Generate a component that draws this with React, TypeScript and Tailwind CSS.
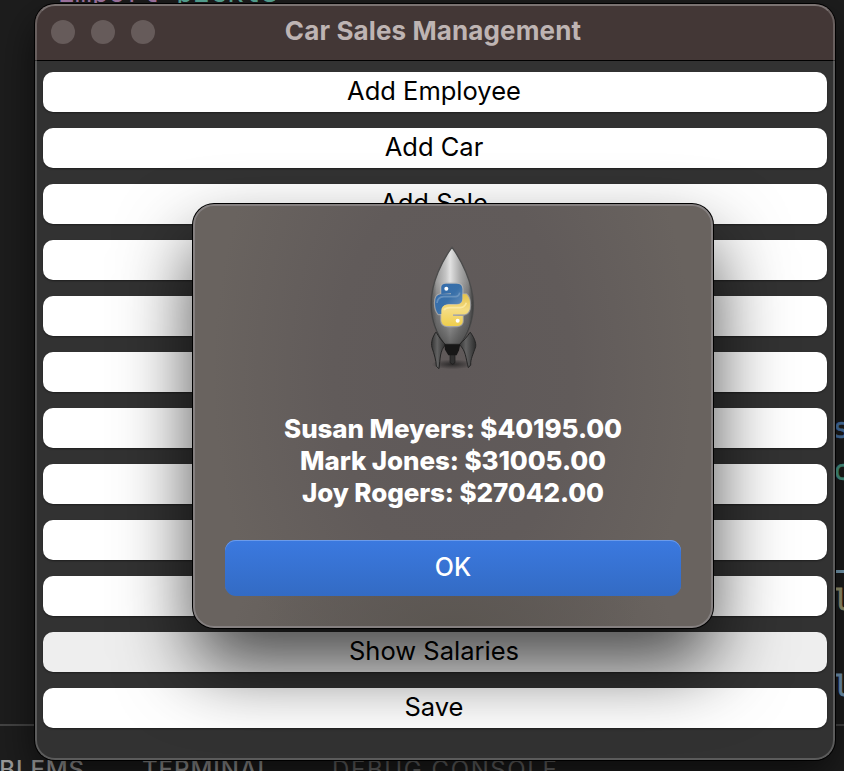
import type { ReactNode } from 'react';

const labels = ['Add Employee', 'Add Car', 'Add Sale', '', '', '', '', '', '', '', 'Show Salaries', 'Save'];

function Editor() {
  return (
    <div className="flex h-full flex-col bg-[#1d1d1d] font-['DejaVu_Sans_Mono',monospace] text-[28px] leading-[32px]">
      <div className="flex h-[724px] shrink-0 justify-between">
        <pre className="-mt-[23px] pl-[58px] font-['DejaVu_Sans_Mono',monospace] text-[#a87baa]">
          import <span className="text-[#5aac9b]">pickle</span>
        </pre>
        <div className="flex w-[11px] flex-col pt-[413px] font-medium">
          <span className="h-[42px] text-[#4e7cb0] [-webkit-text-stroke:0.5px]">s</span>
          <span className="h-[115px] text-[#4da08c] [-webkit-text-stroke:0.5px]">c</span>
          <i className="h-[3px] w-[11px] shrink-0 bg-[#7da5bd]" />
          <span className="mt-[12px] h-[86px] text-[#a09f78] [-webkit-text-stroke:0.8px]">l</span>
          <span className="text-[#789fbd] [-webkit-text-stroke:0.8px]">l</span>
        </div>
      </div>
      <div className="h-[2px] shrink-0 bg-[#444444]" />
      <div className="flex gap-[57px] whitespace-nowrap pt-[31px] font-[Inter,sans-serif] text-[24px] font-medium leading-[26px] tracking-[0.9px] text-[#9a9a9a]">
        <span className="-ml-[58px] w-[143px] text-right">PROBLEMS</span>
        <span className="w-[133px]">TERMINAL</span>
        <span className="font-normal tracking-[1.6px] text-[#686868]">DEBUG CONSOLE</span>
      </div>
    </div>
  );
}

function MenuButton({ children, pressed }: { children: ReactNode; pressed: boolean }) {
  return (
    <button
      className={`flex h-10 w-full shrink-0 items-center justify-center rounded-[10px] pb-[2px] pr-[2px] text-[25.5px] leading-none text-black shadow-[0_1px_2px_rgba(0,0,0,0.4)] ${pressed ? 'bg-[#eeeeee]' : 'bg-white'}`}
    >
      {children}
    </button>
  );
}

function Rocket() {
  return (
    <svg width="90" height="145" viewBox="0 0 270 435" className="ml-1 block">
      <defs>
        <linearGradient id="hull" x1="0" x2="1">
          <stop offset="0" stopColor="#555555" />
          <stop offset=".13" stopColor="#9a9a9a" />
          <stop offset=".35" stopColor="#c5c5c5" />
          <stop offset=".45" stopColor="#e2e2e2" />
          <stop offset=".68" stopColor="#aaaaaa" />
          <stop offset=".88" stopColor="#858585" />
          <stop offset="1" stopColor="#3c3c3c" />
        </linearGradient>
        <linearGradient id="shade" x1="0" x2="0" y1="0" y2="1">
          <stop offset=".35" stopColor="#333333" stopOpacity="0" />
          <stop offset=".7" stopColor="#333333" stopOpacity=".4" />
          <stop offset="1" stopColor="#222222" stopOpacity=".65" />
        </linearGradient>
        <linearGradient id="fin" x1="0" x2="1">
          <stop offset="0" stopColor="#343434" />
          <stop offset=".4" stopColor="#626262" />
          <stop offset="1" stopColor="#2c2c2c" />
        </linearGradient>
        <linearGradient id="blue" x1="0" x2="1" y1="0" y2="1">
          <stop offset="0" stopColor="#346cad" />
          <stop offset=".5" stopColor="#3970a9" />
          <stop offset="1" stopColor="#7398c0" />
        </linearGradient>
        <linearGradient id="yellow" x1="0" x2="0" y1="0" y2="1">
          <stop offset="0" stopColor="#e5c34c" />
          <stop offset=".5" stopColor="#f4dc83" />
          <stop offset="1" stopColor="#efce4c" />
        </linearGradient>
        <radialGradient id="ground">
          <stop offset="0" stopColor="#151515" stopOpacity=".7" />
          <stop offset="1" stopColor="#151515" stopOpacity="0" />
        </radialGradient>
      </defs>
      <ellipse cx="127" cy="388" rx="63" ry="15" fill="url(#ground)" />
      <path d="M126 37C97 76 64 142 63 205C62 253 80 300 104 328H150C172 303 192 253 190 204C188 143 154 75 126 37Z" fill="url(#hull)" stroke="#4b4b4b" strokeWidth="4" />
      <path d="M126 37C97 76 64 142 63 205C62 253 80 300 104 328H150C172 303 192 253 190 204C188 143 154 75 126 37Z" fill="url(#shade)" />
      <path d="M77 292C68 306 62 322 66 338C73 358 78 375 79 394L87 401C91 370 89 347 107 329C96 319 87 307 79 292Z" fill="url(#fin)" stroke="#252525" strokeWidth="3" />
      <path d="M181 292C191 306 199 322 197 335C190 356 181 373 182 390L175 398C167 370 168 346 148 329C160 318 171 306 180 292Z" fill="url(#fin)" stroke="#252525" strokeWidth="3" />
      <path d="M120 355H135V383L128 388L120 383Z" fill="#303030" stroke="#181818" strokeWidth="2" />
      <path d="M103 328H151L147 346L140 361H115L105 344Z" fill="#171717" />
      <g stroke="#b7b7b7" strokeOpacity=".65" strokeWidth="7" strokeLinejoin="round">
        <path d="M94 177V157Q94 146 108 146H139Q157 146 157 162V191Q157 206 141 207H116Q98 208 97 224V237H85Q75 225 75 204Q75 179 92 178H123V175Z" fill="url(#blue)" />
        <path d="M158 178H169Q180 188 180 210Q180 235 164 238H129V243H158V258Q158 271 141 273H112Q94 272 94 255V226Q94 211 112 209H141Q158 207 158 192Z" fill="url(#yellow)" />
      </g>
      <path d="M94 177V157Q94 146 108 146H139Q157 146 157 162V191Q157 206 141 207H116Q98 208 97 224V237H85Q75 225 75 204Q75 179 92 178H123V175Z" fill="url(#blue)" />
      <path d="M158 178H169Q180 188 180 210Q180 235 164 238H129V243H158V258Q158 271 141 273H112Q94 272 94 255V226Q94 211 112 209H141Q158 207 158 192Z" fill="url(#yellow)" />
      <path d="M81 204Q83 186 101 185H136Q147 185 149 173" fill="none" stroke="#83a7ca" strokeWidth="5" opacity=".6" />
      <path d="M102 225Q107 218 120 218H151Q165 216 169 203" fill="none" stroke="#fff0b0" strokeWidth="5" opacity=".7" />
      <circle cx="109" cy="161" r="6" fill="#ffffff" />
      <circle cx="143" cy="257" r="6" fill="#ffffff" />
    </svg>
  );
}

export default function App() {
  return (
    <main className="relative h-[771px] w-[844px] overflow-hidden font-[Inter,sans-serif]">
      <Editor />
      <section className="absolute left-[35px] top-[4px] flex h-[756px] w-[800px] flex-col overflow-hidden rounded-[20px] bg-[#323232] shadow-[0_0_0_1px_#000,0_16px_40px_rgba(0,0,0,0.6)]">
        <header className="grid h-[57px] shrink-0 grid-cols-[130px_536px_1fr] items-center border-b border-black bg-[#433736]">
          <div className="flex gap-4 pl-4">
            <i className="size-6 rounded-full bg-[#665b5a]" />
            <i className="size-6 rounded-full bg-[#665b5a]" />
            <i className="size-6 rounded-full bg-[#665b5a]" />
          </div>
          <h1 className="pb-[2px] text-center text-[26px] font-bold leading-none tracking-[0.12px] text-[#beb4b3]">Car Sales Management</h1>
        </header>
        <nav className="flex flex-col gap-4 px-2 pt-[11px]">
          {labels.map((label, index) => (
            <MenuButton key={index} pressed={index === 10}>{label}</MenuButton>
          ))}
        </nav>
        <div className="pointer-events-none absolute inset-0 rounded-[20px] border-2 border-white/20 border-t-white/30" />
      </section>
      <section
        role="dialog"
        className="absolute left-[193px] top-[204px] flex h-[424px] w-[520px] flex-col items-center rounded-[21px] border-2 border-[#858080] bg-[radial-gradient(ellipse_220px_90px_at_50%_100%,#5b5651_0%,transparent_100%),radial-gradient(ellipse_240px_380px_at_50%_40%,#5f5959_0%,#615b5a_50%,transparent_100%)] bg-[#69635f] pt-[29px] shadow-[0_0_0_1px_#000,0_38px_74px_rgba(0,0,0,0.7)]"
      >
        <Rocket />
        <div className="mt-[33px] text-center text-[26px] font-extrabold leading-8 tracking-[-0.1px] text-white">
          <p>Susan Meyers: $40195.00</p>
          <p>Mark Jones: $31005.00</p>
          <p>Joy Rogers: $27042.00</p>
        </div>
        <button className="mt-[31px] flex h-14 w-[456px] items-center justify-center rounded-[11px] bg-linear-to-b from-[#3b79e0] to-[#336bc4] pb-[2px] text-[25px] font-medium leading-none text-white shadow-[inset_0_1px_0_#6c9bea]">
          OK
        </button>
      </section>
    </main>
  );
}
